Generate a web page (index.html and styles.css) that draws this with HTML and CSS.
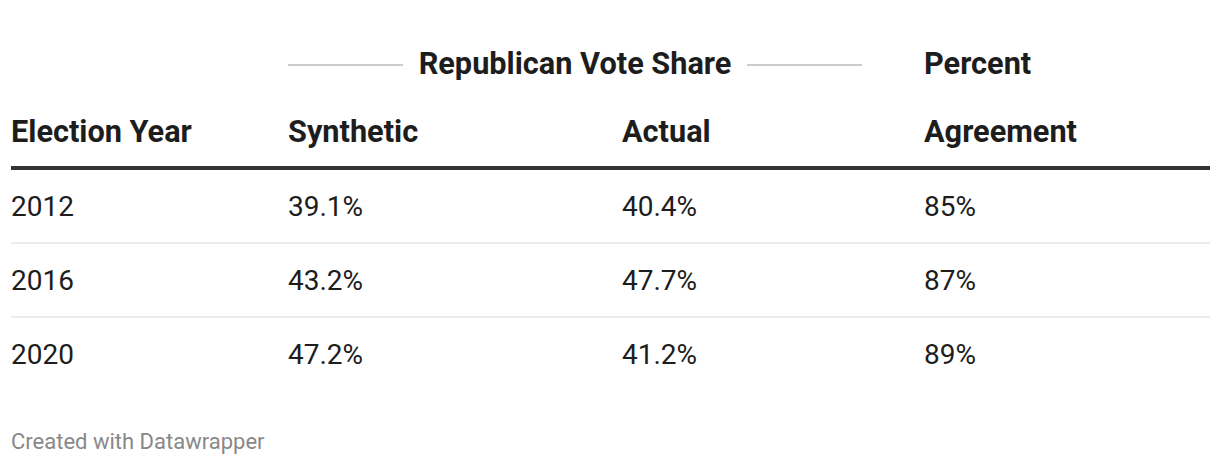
FILE: index.html
```html
<!DOCTYPE html>
<html lang="en">
<head>
<meta charset="utf-8">
<title>Republican Vote Share</title>
<link rel="stylesheet" href="styles.css">
</head>
<body>
<div class="chart">
  <div class="table">
    <div class="head">
      <div class="group">
        <span class="rule"></span>
        <span class="group-label">Republican Vote Share</span>
        <span class="rule"></span>
      </div>
      <div class="th col1">Election Year</div>
      <div class="th col2">Synthetic</div>
      <div class="th col3">Actual</div>
      <div class="th col4"><span class="l1">Percent</span><span class="l2">Agreement</span></div>
    </div>
    <div class="row">
      <div class="td">2012</div><div class="td">39.1%</div><div class="td">40.4%</div><div class="td">85%</div>
    </div>
    <div class="row">
      <div class="td">2016</div><div class="td">43.2%</div><div class="td">47.7%</div><div class="td">87%</div>
    </div>
    <div class="row last">
      <div class="td">2020</div><div class="td">47.2%</div><div class="td">41.2%</div><div class="td">89%</div>
    </div>
  </div>
  <div class="footer">Created with Datawrapper</div>
</div>
</body>
</html>
```

FILE: styles.css
```css
html, body {
  margin: 0;
  padding: 0;
  background: #ffffff;
}

body {
  font-family: Roboto, "Liberation Sans", sans-serif;
  color: #1d1d1d;
}

.chart {
  padding: 47px 10px 0 11px;
  width: 1199px;
}

.table {
  width: 1199px;
}

.head,
.row {
  display: grid;
  grid-template-columns: 277px 334px 302px 286px;
}

.head {
  grid-template-rows: 34px 34px 51px;
  border-bottom: 4px solid #333333;
}

.group {
  grid-column: 2 / 4;
  grid-row: 1;
  display: flex;
  align-items: center;
  gap: 16px;
  padding-right: 62px;
}

.rule {
  flex: 1;
  height: 2px;
  margin-top: 2px;
  background: #cccccc;
}

.group-label,
.th {
  font-size: 30.7px;
  font-weight: 700;
  line-height: 34px;
  white-space: nowrap;
}

.th {
  grid-row: 3;
  align-self: start;
}

.col4 {
  grid-column: 4;
  grid-row: 1 / 4;
  display: flex;
  flex-direction: column;
  gap: 34px;
}

.row {
  height: 72px;
  border-bottom: 2px solid #ebebeb;
}

.row.last {
  border-bottom: none;
}

.td {
  font-size: 28px;
  line-height: 34px;
  padding-top: 20px;
}

.footer {
  margin-top: 39px;
  font-size: 22px;
  line-height: 26px;
  color: #888888;
}
```
